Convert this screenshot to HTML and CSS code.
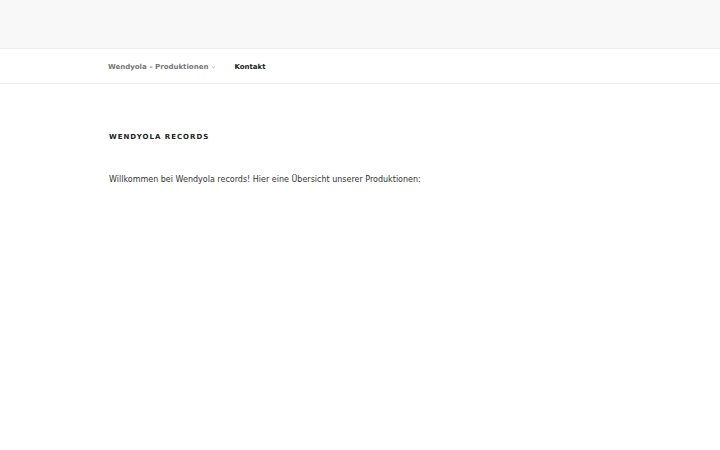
FILE: index.html
```html
<!DOCTYPE html>
<html lang="de">
<head>
<meta charset="utf-8">
<title>Wendyola records</title>
<link rel="stylesheet" href="styles.css">
</head>
<body>
<header class="masthead"></header>
<nav class="navbar">
  <ul class="menu">
    <li class="item parent">Wendyola – Produktionen <svg class="chev" width="5" height="4" viewBox="0 0 5 4"><path d="M0.8 1.2 L2.5 2.8 L4.2 1.2" fill="none" stroke="#999" stroke-width="0.7"/></svg></li>
    <li class="item current">Kontakt</li>
  </ul>
</nav>
<main class="content">
  <h2 class="page-title">Wendyola records</h2>
  <p class="intro">Willkommen bei Wendyola records! Hier eine Übersicht unserer Produktionen:</p>
</main>
</body>
</html>
```
FILE: styles.css
```css
html, body { margin: 0; padding: 0; background: #fff; }
body { font-family: "DejaVu Sans", sans-serif; color: #333; }
.masthead { height: 48px; background: #f8f8f8; }
.navbar { height: 33px; padding-top: 1px; border-top: 1px solid #eee; border-bottom: 1px solid #eee; background: #fff; display: flex; align-items: center; padding-left: 108px; }
.menu { list-style: none; margin: 0; padding: 0; display: flex; gap: 18px; }
.item { font-size: 7px; font-weight: bold; color: #767676; display: flex; align-items: center; gap: 3px; }
.item.current { color: #222; }
.content { padding: 49px 0 0 109px; }
.page-title { margin: 0; font-size: 7px; font-weight: bold; letter-spacing: 1px; text-transform: uppercase; color: #222; }
.intro { margin: 34px 0 0; font-size: 8px; color: #333; }
```
